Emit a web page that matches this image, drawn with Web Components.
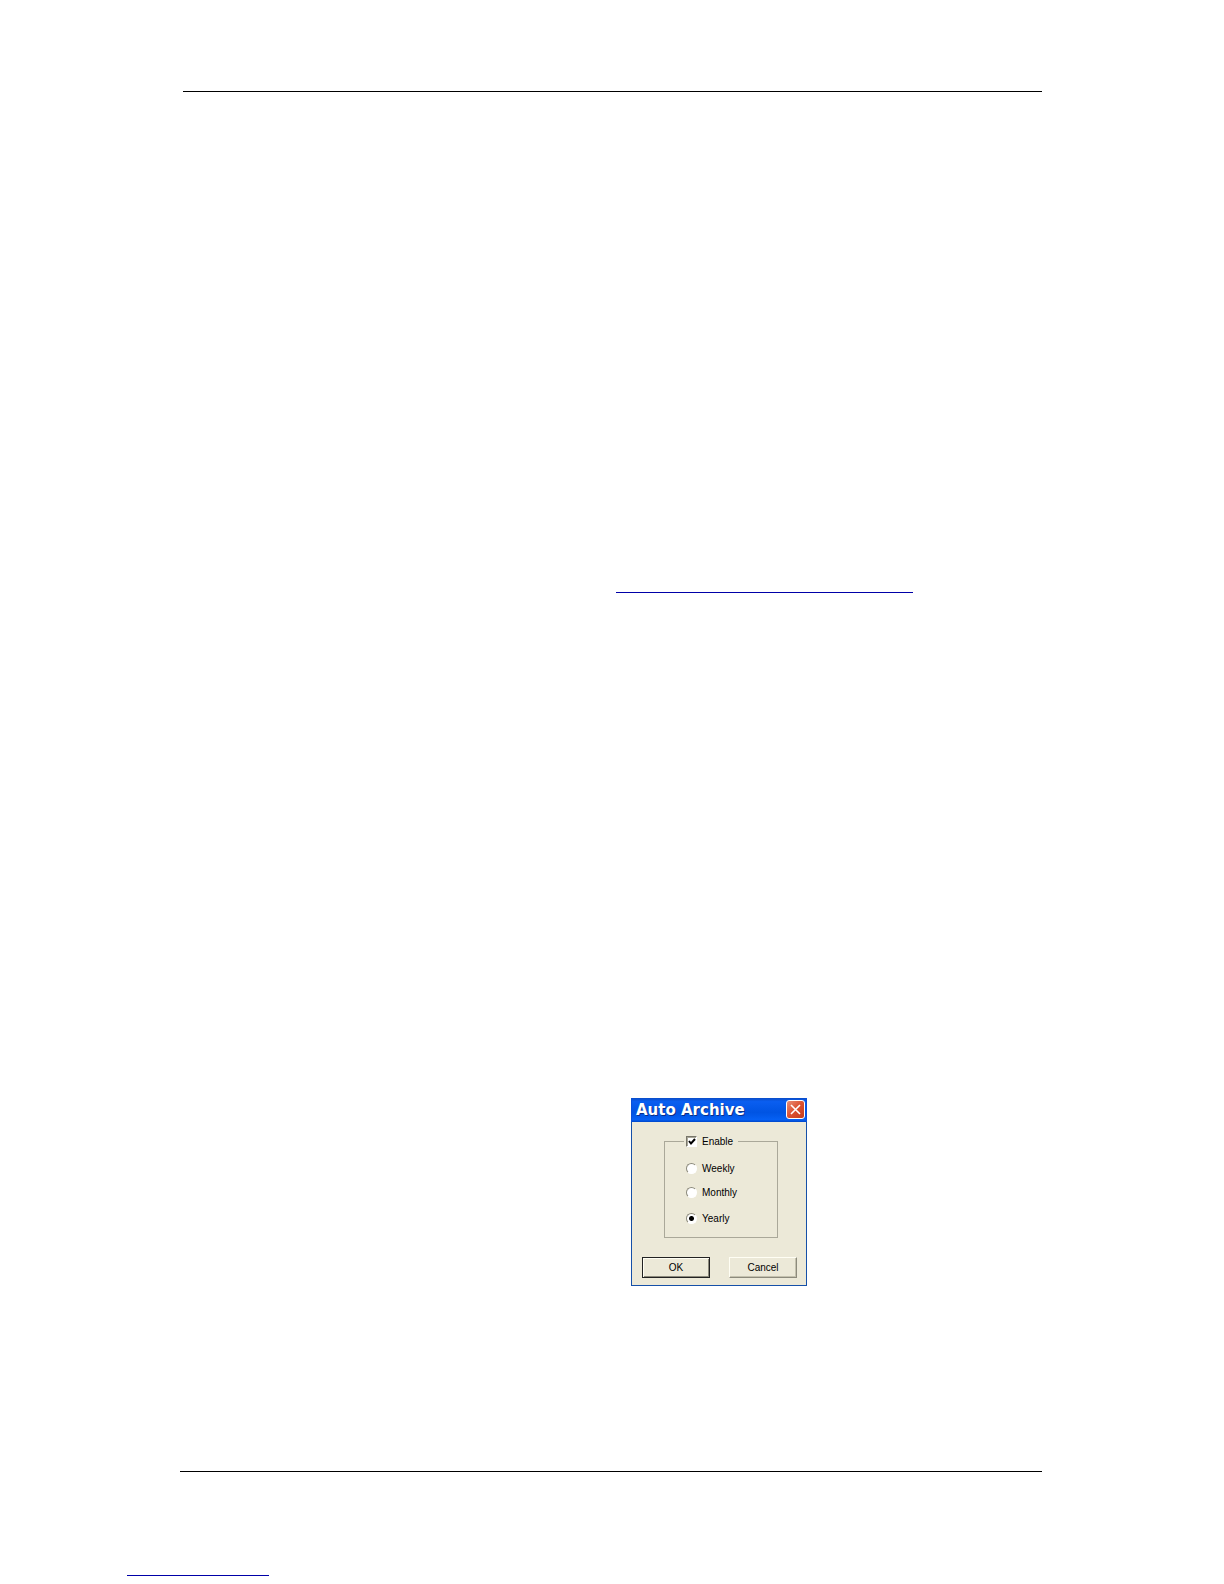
<!DOCTYPE html>
<html lang="en">
<head>
<meta charset="utf-8">
<title>Auto Archive</title>
<style>
    body {
        margin: 0;
        background: #fff;
        font-family: "Liberation Sans", Arial, sans-serif;
    }
</style>
</head>
<body>
<manual-page>
    <rule-link slot="link" label="Related section"></rule-link>
    <xp-dialog heading="Auto Archive">
        <archive-options></archive-options>
        <xp-button slot="actions" default>OK</xp-button>
        <xp-button slot="actions">Cancel</xp-button>
    </xp-dialog>
    <rule-link slot="footer" label="Website"></rule-link>
</manual-page>

<script>
// Page with a rule at the top and at the bottom
class ManualPage extends HTMLElement {
    constructor() {
        super();
        this.attachShadow({ mode: 'open' });
        this.shadowRoot.innerHTML = `
        <style>
            :host { display: block; padding: 91px 182px 8px 180px; }
            hr { margin: 0; border: 0; height: 1px; background: #000; }
            header { padding-left: 3px; }
            main {
                display: flex;
                flex-direction: column;
                align-items: flex-start;
                padding: 500px 0 185px 436px;
            }
            .link { width: 297px; }
            .figure { margin: 505px 0 0 15px; }
            .site { width: 142px; margin: 103px 0 0 -53px; }
        </style>
        <header><hr></header>
        <main>
            <div class="link"><slot name="link"></slot></div>
            <div class="figure"><slot></slot></div>
        </main>
        <footer>
            <hr>
            <div class="site"><slot name="footer"></slot></div>
        </footer>`;
    }
}
customElements.define('manual-page', ManualPage);


// Link that only shows its underline
class RuleLink extends HTMLElement {
    constructor() {
        super();
        this.attachShadow({ mode: 'open' });
    }

    connectedCallback() {
        this.shadowRoot.innerHTML = `
        <style>
            :host { display: block; }
            a { display: block; height: 1px; background: #0000a8; }
        </style>
        <a href="#" aria-label="${this.getAttribute('label')}"></a>`;
    }
}
customElements.define('rule-link', RuleLink);


class XpDialog extends HTMLElement {
    constructor() {
        super();
        this.attachShadow({ mode: 'open' });
    }

    connectedCallback() {
        this.shadowRoot.innerHTML = `
        <style>
            :host { display: block; }
            section {
                box-sizing: border-box;
                width: 176px;
                border: 1px solid #1550a8;
                border-top: 0;
                background: #ece9d8;
            }
            .bar {
                display: flex;
                align-items: flex-start;
                justify-content: space-between;
                height: 24px;
                box-sizing: border-box;
                padding: 2px 1px 0 4px;
                margin: 0 -1px;
                border: 0 solid #0a50d8;
                border-width: 0 1px;
                background: linear-gradient(#0a4cc8, #0a5ef0 15%, #0054e3 60%, #0560f4 90%, #0046c8);
            }
            h1 {
                margin: 0;
                font: bold 15px/20px "DejaVu Sans", Verdana, sans-serif;
                color: #fff;
                text-shadow: 1px 1px #0a2f88;
                white-space: nowrap;
            }
            .close {
                flex: none;
                display: flex;
                width: 19px;
                height: 19px;
                padding: 0;
                border: 1px solid #fff;
                border-radius: 3px;
                background: linear-gradient(135deg, #e99078, #dc5030 50%, #c43c1c);
            }
            .body { padding: 12px 28px 0 32px; }
            .actions { display: flex; gap: 19px; padding: 19px 9px 7px 10px; }
        </style>
        <section role="dialog" aria-labelledby="heading">
            <div class="bar">
                <h1 id="heading">${this.getAttribute('heading')}</h1>
                <button class="close" type="button" aria-label="Close">
                    <svg width="17" height="17" viewBox="0 0 17 17" fill="none" stroke="#fff" stroke-width="1.6">
                        <path d="M4 4l9 9M13 4l-9 9"/>
                    </svg>
                </button>
            </div>
            <div class="body"><slot></slot></div>
            <div class="actions"><slot name="actions"></slot></div>
        </section>`;
    }
}
customElements.define('xp-dialog', XpDialog);


class XpButton extends HTMLElement {
    constructor() {
        super();
        this.attachShadow({ mode: 'open' });
        this.shadowRoot.innerHTML = `
        <style>
            :host { display: block; }
            button {
                display: block;
                width: 68px;
                height: 21px;
                padding: 0;
                border: 1px solid;
                border-color: #fffef4 #8c8a7c #8c8a7c #fffef4;
                box-shadow: inset -1px -1px #c4c1ae;
                background: #ece9d8;
                font: 10px/12px "Liberation Sans", Arial, sans-serif;
                color: #000;
            }
            :host([default]) button {
                border-color: #222;
                box-shadow: inset 1px 1px #fffef4, inset -1px -1px #8c8a7c;
            }
        </style>
        <button type="button"><slot></slot></button>`;
    }
}
customElements.define('xp-button', XpButton);


// Group box: the tick box stands in the legend, the periods below it
class ArchiveOptions extends HTMLElement {
    constructor() {
        super();
        this.attachShadow({ mode: 'open' });
        this.shadowRoot.innerHTML = `
        <style>
            :host { display: block; }
            fieldset {
                min-width: 0;
                margin: 0;
                padding: 0 0 5px;
                border: 1px solid #aaa899;
            }
            legend { margin-left: 19px; padding: 0 5px 0 2px; }
            label {
                display: flex;
                align-items: center;
                gap: 5px;
                box-sizing: border-box;
                height: 14px;
                padding-top: 2px;
                font-size: 10px;
                line-height: 12px;
                color: #000;
            }
            .periods {
                display: grid;
                grid-template-rows: 24px 24px 28px;
                align-items: center;
                padding: 8px 0 0 21px;
            }
            .mark { display: grid; flex: none; margin-bottom: 2px; }
            .mark > * { grid-area: 1 / 1; }
            input {
                appearance: none;
                box-sizing: border-box;
                width: 11px;
                height: 11px;
                margin: 0;
                border: 1px solid;
                border-color: #77756a #fff #fff #77756a;
                background: #fff;
            }
            input[type=checkbox] { box-shadow: inset 1px 1px #aaa899; }
            input[type=radio] {
                border-radius: 50%;
                border-color: #8c8a7c #fff #fff #8c8a7c;
            }
            input[type=radio]:checked {
                background: radial-gradient(circle, #000 2px, #fff 3px);
            }
            svg { pointer-events: none; visibility: hidden; }
            input:checked + svg { visibility: visible; }
        </style>
        <fieldset>
            <legend>
                <label>
                    <span class="mark">
                        <input type="checkbox" checked>
                        <svg width="11" height="11" viewBox="0 0 11 11" fill="none" stroke="#000" stroke-width="2">
                            <path d="M3 5l2 2.500 4-4.500"/>
                        </svg>
                    </span>
                    Enable
                </label>
            </legend>
            <div class="periods">
                <label><span class="mark"><input type="radio" name="period"></span>Weekly</label>
                <label><span class="mark"><input type="radio" name="period"></span>Monthly</label>
                <label><span class="mark"><input type="radio" name="period" checked></span>Yearly</label>
            </div>
        </fieldset>`;
    }
}
customElements.define('archive-options', ArchiveOptions);
</script>
</body>
</html>
